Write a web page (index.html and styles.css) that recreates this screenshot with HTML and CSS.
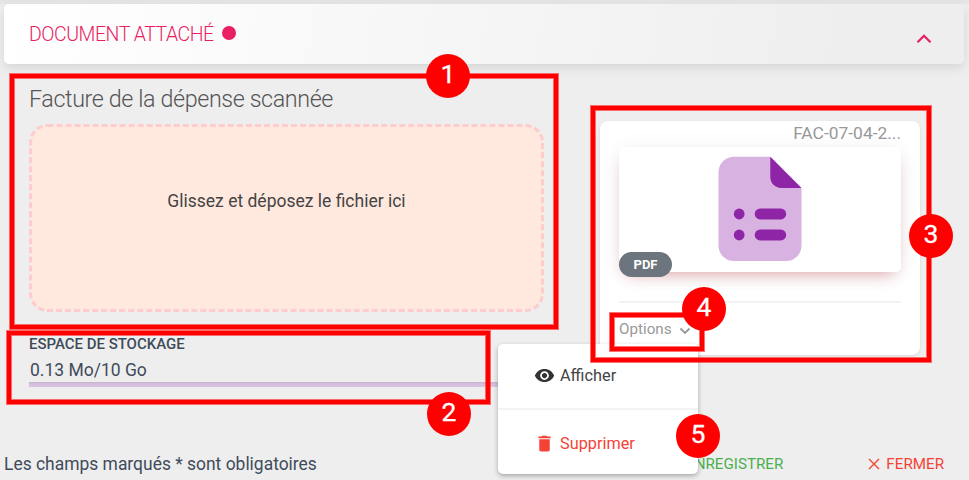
FILE: index.html
```html
<!DOCTYPE html>
<html lang="fr">
<head>
<meta charset="utf-8">
<title>Document attaché</title>
<link rel="stylesheet" href="styles.css">
</head>
<body>
<div class="page">
  <header class="panel-header">
    <h2 class="panel-title"><span class="panel-label">DOCUMENT ATTACHÉ</span><span class="dot"></span></h2>
    <svg class="chevron-up" width="16" height="10" viewBox="0 0 16 10"><path d="M1.500 8.300 8 1.800l6.500 6.500" fill="none" stroke="#e91e63" stroke-width="2.200"/></svg>
  </header>
  <main class="content">
    <section class="upload">
      <h3 class="upload-title"><span>Facture de la dépense scannée</span></h3>
      <div class="dropzone"><svg class="dash" width="515" height="188"><rect x="1.500" y="1.500" width="512" height="185" rx="17" fill="#ffe8de" stroke="#ffcccd" stroke-width="3" stroke-dasharray="6 3.020"/></svg><span class="drop-text">Glissez et déposez le fichier ici</span></div>
      <div class="storage-label"><span>ESPACE DE STOCKAGE</span></div>
      <div class="storage-value"><span>0.13 Mo/10 Go</span></div>
      <div class="storage-bar"></div>
    </section>
    <article class="file-card">
      <div class="file-name"><span>FAC-07-04-2...</span></div>
      <div class="preview">
        <svg width="84" height="106" viewBox="0 0 84 106">
          <path d="M16 .7H52.300L83.500 32V89.500a15.500 15.500 0 0 1-15.500 15.500H16A15.500 15.500 0 0 1 .500 89.500V16.200A15.500 15.500 0 0 1 16 .7Z" fill="#d8b2e1"/>
          <path d="M52.300.700 83.500 32H63a10.700 10.700 0 0 1-10.700-10.700Z" fill="#8e24a6"/>
          <g fill="#8e24a6"><circle cx="21.200" cy="58" r="5.400"/><circle cx="21.200" cy="79" r="5.400"/><rect x="36.700" y="52.600" width="31.500" height="10.800" rx="5.400"/><rect x="36.700" y="73.600" width="31.500" height="10.800" rx="5.400"/></g>
        </svg>
        <span class="type-badge">PDF</span>
      </div>
      <div class="options"><span class="options-text">Options</span><svg width="12" height="8" viewBox="0 0 12 8"><path d="m1.500 1.500 4.500 4.500 4.500-4.500" fill="none" stroke="#999" stroke-width="1.900"/></svg></div>
    </article>
  </main>
  <footer class="footer">
    <span class="note">Les champs marqués * sont obligatoires</span>
    <span class="action save">ENREGISTRER</span>
    <span class="action close"><svg width="12" height="12" viewBox="0 0 12 12"><path d="m1 1 10 10M11 1 1 11" stroke="#f44336" stroke-width="1.400"/></svg><span class="close-text">FERMER</span></span>
  </footer>

  <div class="menu">
    <div class="menu-item"><svg width="21" height="21" viewBox="0 0 24 24"><path fill="#333" d="M12 4.500C7 4.500 2.730 7.610 1 12c1.730 4.390 6 7.500 11 7.500s9.270-3.110 11-7.500c-1.730-4.390-6-7.500-11-7.500zM12 17c-2.760 0-5-2.240-5-5s2.240-5 5-5 5 2.240 5 5-2.240 5-5 5zm0-8c-1.660 0-3 1.340-3 3s1.340 3 3 3 3-1.340 3-3-1.340-3-3-3z"/></svg><span class="show-text">Afficher</span></div>
    <div class="menu-item danger"><svg width="21" height="21" viewBox="0 0 24 24"><path fill="#f44336" d="M6 19c0 1.100.9 2 2 2h8c1.100 0 2-.9 2-2V7H6v12zM19 4h-3.500l-1-1h-5l-1 1H5v2h14V4z"/></svg><span class="delete-text">Supprimer</span></div>
  </div>

  <div class="frame frame-upload"></div>
  <div class="frame frame-storage"></div>
  <div class="frame frame-card"></div>
  <div class="frame frame-options"></div>
  <div class="step step-1">1</div>
  <div class="step step-2">2</div>
  <div class="step step-3">3</div>
  <div class="step step-4">4</div>
  <div class="step step-5">5</div>
</div>
</body>
</html>
```
FILE: styles.css
```css
* { box-sizing: border-box; }
body { margin: 0; background: #eee; font-family: Roboto, "Liberation Sans", sans-serif; color: #3f4b5b; }
h2, h3 { margin: 0; font-weight: 300; }
svg { display: block; flex: none; }
.page { position: relative; width: 969px; height: 480px; overflow: hidden; padding: 4px 5px 0 4px; background: linear-gradient(#e4e4e4, #e7e7e7 4px, #eee 4px); white-space: nowrap; }

.panel-header { display: flex; align-items: center; justify-content: space-between; height: 60px; padding: 0 32px 0 25px; border-radius: 5px; background: linear-gradient(100deg, #fff, #eee 90%); box-shadow: 0 4px 12px -1px rgba(0, 0, 0, .12); }
.panel-title { display: flex; align-items: center; gap: 8px; font-size: 19.500px; line-height: 24px; color: #e91e63; }
.panel-label { width: 185px; padding-top: 1px; letter-spacing: -.48px; }
.dot { width: 14px; height: 14px; margin-top: -2px; border-radius: 50%; background: #e91e63; }
.chevron-up { margin-top: 10px; }

.content { display: grid; grid-template-columns: 515px 320px; column-gap: 56px; height: 378px; padding: 20px 25px 0; }
.upload-title { height: 40px; font-size: 23.300px; line-height: 30px; color: #555; letter-spacing: -.39px; }
.dropzone { display: grid; height: 188px; }
.dash, .drop-text { grid-area: 1 / 1; }
.drop-text { justify-self: center; padding-top: 65px; font-size: 17.500px; line-height: 24px; color: #444; }
.storage-label { margin-top: 22px; font-size: 15px; font-weight: 500; line-height: 20px; letter-spacing: -.02px; }
.storage-value { margin: 5px 0 0 1px; font-size: 17.500px; line-height: 23px; }
.storage-bar { height: 5px; background: linear-gradient(#c8b4cd, #d6bfdd 40%, #d9c4e0); }

.file-card { height: 234px; margin-top: 37px; padding: 0 19px; border-radius: 8px; background: #fff; box-shadow: 0 1px 3px rgba(0, 0, 0, .1); }
.file-name { height: 26px; padding-top: 1px; text-align: right; font-size: 17.400px; line-height: 23px; color: #999; }
.preview { position: relative; display: flex; justify-content: center; height: 125px; padding-top: 9px; border-radius: 5px; background: #fff; box-shadow: 0 2px 22px rgba(0, 0, 0, .06), 0 8px 15px -7px rgba(190, 30, 45, .4); }
.type-badge { position: absolute; left: 0; bottom: -5px; width: 53px; height: 25px; border-radius: 13px; background: #6c757d; color: #fff; font-size: 13px; font-weight: 700; line-height: 25px; text-align: center; }
.options { display: flex; align-items: center; gap: 8px; margin-top: 29px; padding-top: 16px; border-top: 2px solid #f3f3f3; font-size: 15.200px; line-height: 20px; color: #999; }
.options-text { width: 52px; }
.options svg { margin-top: 3px; }

.footer { display: flex; align-items: center; height: 43px; font-size: 15.200px; }
.note { width: 682px; font-size: 17.450px; }
.action { line-height: 20px; }
.save { color: #4caf50; }
.close { display: flex; align-items: center; gap: 6px; margin-left: auto; margin-right: 20px; color: #f44336; }

.menu { position: absolute; left: 498px; top: 344px; width: 200px; height: 130px; border-radius: 5px; background: #fff; box-shadow: 0 2px 5px rgba(0, 0, 0, .3); }
.menu-item { display: flex; align-items: center; gap: 5px; height: 64px; padding: 0 0 2px 36px; font-size: 16.300px; color: #444; }
.menu-item + .menu-item { height: 66px; padding: 3px 0 0 36px; border-top: 2px solid #f3f3f3; color: #f44336; }

.frame { position: absolute; border: 4px solid red; box-shadow: 0 0 0 1px rgba(255, 0, 0, .55), inset 0 0 0 1px rgba(255, 0, 0, .55); }
.frame-upload { left: 10px; top: 74px; width: 548px; height: 255px; }
.frame-storage { left: 7px; top: 331px; width: 483px; height: 73px; }
.frame-card { left: 591px; top: 106px; width: 340px; height: 256px; }
.frame-options { left: 610px; top: 313px; width: 94px; height: 38px; }
.step { position: absolute; width: 44px; height: 44px; border-radius: 50%; background: red; color: #fff; font-size: 26.500px; font-weight: 400; line-height: 40px; text-align: center; -webkit-text-stroke: .3px #fff; }
.step-1 { left: 426px; top: 54px; }
.step-2 { left: 427px; top: 392px; }
.step-3 { left: 909px; top: 214px; }
.step-4 { left: 682px; top: 287px; }
.step-5 { left: 676px; top: 414px; }
```
